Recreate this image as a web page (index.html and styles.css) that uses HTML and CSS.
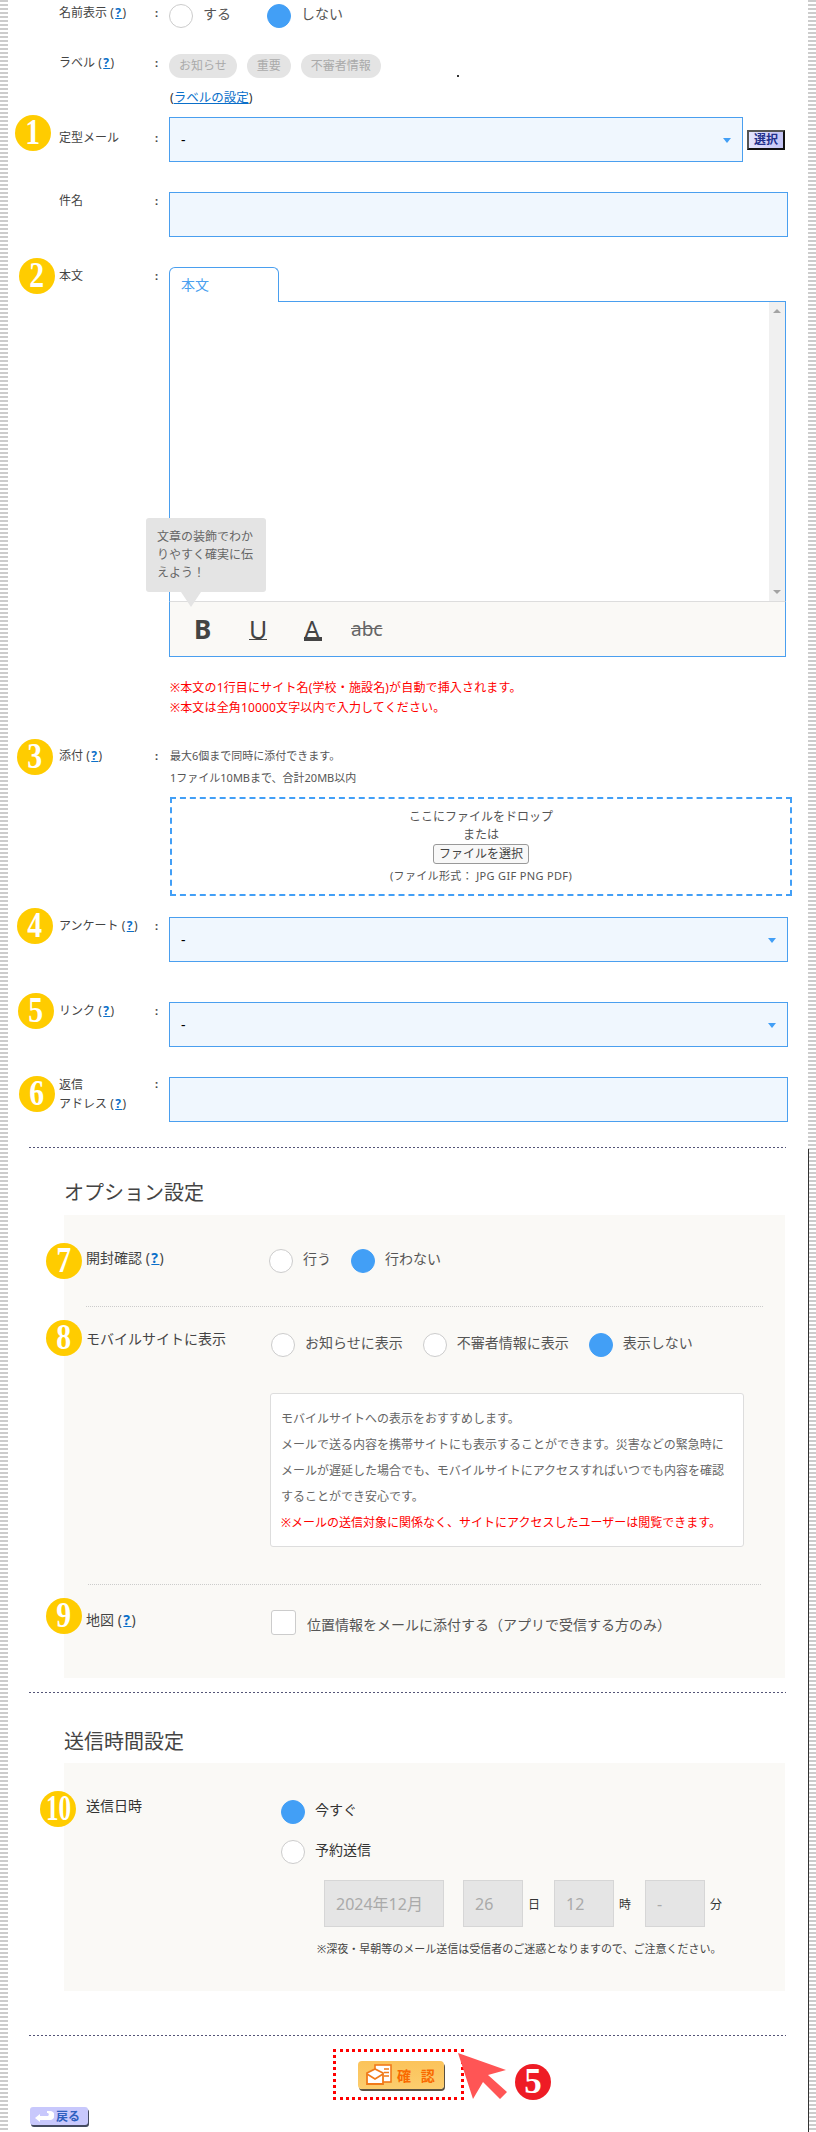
FILE: index.html
```html
<!DOCTYPE html>
<html lang="ja">
<head>
<meta charset="utf-8">
<title>メール作成</title>
<link rel="stylesheet" href="styles.css">
</head>
<body>
<div class="page">
  <span class="frame-line"></span>

  <div class="row row-name">
    <div class="label">名前表示 <span class="help">(<a href="#">?</a>)</span></div>
    <div class="colon">:</div>
    <div class="radios radios-wide">
      <label class="radio"><input type="radio" name="n">する</label>
      <label class="radio"><input type="radio" name="n" checked>しない</label>
    </div>
  </div>

  <div class="row row-labels">
    <div class="label">ラベル <span class="help">(<a href="#">?</a>)</span></div>
    <div class="colon">:</div>
    <div>
      <div class="pills">
        <span class="pill">お知らせ</span>
        <span class="pill">重要</span>
        <span class="pill">不審者情報</span>
      </div>
      <div class="label-link">(<a href="#">ラベルの設定</a>)</div>
    </div>
    <span class="stray-dot"></span>
  </div>

  <div class="row row-template row-low">
    <span class="badge b1"><span class="num">1</span></span>
    <div class="label">定型メール</div>
    <div class="colon">:</div>
    <div class="template-field">
      <div class="select-wrap"><select class="field"><option>-</option></select></div>
      <button class="pick" type="button">選択</button>
    </div>
  </div>

  <div class="row row-gap">
    <div class="label">件名</div>
    <div class="colon">:</div>
    <input class="field" type="text">
  </div>

  <div class="row row-gap">
    <span class="badge b2"><span class="num">2</span></span>
    <div class="label">本文</div>
    <div class="colon">:</div>
    <div>
      <div class="editor">
        <div class="tabs">
          <div class="tab">本文</div>
          <div class="tab-rest"></div>
        </div>
        <div class="editor-body">
          <div class="editor-text"></div>
          <div class="scroll"><span class="scroll-up"></span><span class="scroll-down"></span></div>
        </div>
        <div class="toolbar">
          <span class="tool tool-b">B</span>
          <span class="tool tool-u">U</span>
          <span class="tool tool-a">A</span>
          <span class="tool tool-s">abc</span>
        </div>
        <div class="tip">文章の装飾でわかりやすく確実に伝えよう！</div>
      </div>
      <p class="notes">※本文の1行目にサイト名(学校・施設名)が自動で挿入されます。<br>※本文は全角10000文字以内で入力してください。</p>
    </div>
  </div>

  <div class="row row-attach">
    <span class="badge b3"><span class="num">3</span></span>
    <div class="label">添付 <span class="help">(<a href="#">?</a>)</span></div>
    <div class="colon">:</div>
    <div>
      <p class="hint">最大6個まで同時に添付できます。</p>
      <p class="hint hint-second">1ファイル10MBまで、合計20MB以内</p>
      <div class="drop">
        <div>ここにファイルをドロップ</div>
        <div>または</div>
        <button class="file-btn" type="button">ファイルを選択</button>
        <div class="drop-note">(ファイル形式： JPG GIF PNG PDF)</div>
      </div>
    </div>
  </div>

  <div class="row row-survey">
    <span class="badge b4"><span class="num">4</span></span>
    <div class="label">アンケート <span class="help">(<a href="#">?</a>)</span></div>
    <div class="colon">:</div>
    <div class="select-wrap"><select class="field"><option>-</option></select></div>
  </div>

  <div class="row row-link">
    <span class="badge b5"><span class="num">5</span></span>
    <div class="label">リンク <span class="help">(<a href="#">?</a>)</span></div>
    <div class="colon">:</div>
    <div class="select-wrap"><select class="field"><option>-</option></select></div>
  </div>

  <div class="row row-gap row-up">
    <span class="badge b6"><span class="num">6</span></span>
    <div class="label label-tall">返信<br>アドレス <span class="help">(<a href="#">?</a>)</span></div>
    <div class="colon">:</div>
    <input class="field" type="text">
  </div>

  <div class="divider divider-first"></div>

  <h2 class="heading heading-option">オプション設定</h2>
  <section class="panel panel-option">
    <div class="opt-row opt-open">
      <span class="badge b7"><span class="num">7</span></span>
      <div class="opt-label">開封確認 <span class="help">(<a href="#">?</a>)</span></div>
      <div class="radios">
        <label class="radio"><input type="radio" name="o">行う</label>
        <label class="radio"><input type="radio" name="o" checked>行わない</label>
      </div>
    </div>
    <hr class="sep sep-one">
    <div class="opt-row opt-mobile">
      <span class="badge b8"><span class="num">8</span></span>
      <div class="opt-label">モバイルサイトに表示</div>
      <div>
        <div class="radios">
          <label class="radio"><input type="radio" name="m">お知らせに表示</label>
          <label class="radio"><input type="radio" name="m">不審者情報に表示</label>
          <label class="radio"><input type="radio" name="m" checked>表示しない</label>
        </div>
        <div class="info">
          <p>モバイルサイトへの表示をおすすめします。</p>
          <p>メールで送る内容を携帯サイトにも表示することができます。災害などの緊急時にメールが遅延した場合でも、モバイルサイトにアクセスすればいつでも内容を確認することができ安心です。</p>
          <p class="info-red">※メールの送信対象に関係なく、サイトにアクセスしたユーザーは閲覧できます。</p>
        </div>
      </div>
    </div>
    <hr class="sep sep-two">
    <div class="opt-row opt-map">
      <span class="badge b9"><span class="num">9</span></span>
      <div class="opt-label">地図 <span class="help">(<a href="#">?</a>)</span></div>
      <label class="check"><input type="checkbox">位置情報をメールに添付する（アプリで受信する方のみ）</label>
    </div>
  </section>

  <div class="divider divider-second"></div>

  <h2 class="heading heading-time">送信時間設定</h2>
  <section class="panel panel-time">
    <div class="opt-row opt-time">
      <span class="badge b10"><span class="num num-wide">10</span></span>
      <div class="opt-label opt-label-dark">送信日時</div>
      <div class="time-field">
        <label class="radio"><input type="radio" name="t" checked>今すぐ</label>
        <label class="radio radio-second"><input type="radio" name="t">予約送信</label>
        <div class="date-row">
          <select class="date date-month" disabled><option>2024年12月</option></select>
          <select class="date" disabled><option>26</option></select><span class="unit">日</span>
          <select class="date" disabled><option>12</option></select><span class="unit">時</span>
          <select class="date" disabled><option>-</option></select><span class="unit">分</span>
        </div>
        <p class="time-note">※深夜・早朝等のメール送信は受信者のご迷惑となりますので、ご注意ください。</p>
      </div>
    </div>
  </section>

  <div class="divider divider-third"></div>

  <div class="confirm-area">
    <div class="confirm-box">
      <button class="confirm" type="button">
        <svg class="confirm-icon" width="26" height="21" viewBox="0 0 26 21">
          <rect x="9" y="1" width="16" height="17" fill="#fff" stroke="#f07a1a" stroke-width="1.6"/>
          <path d="M18 5h5M18 8.500h5M18 12h5" stroke="#f07a1a" stroke-width="1.4"/>
          <path d="M1 9l8-4 8 4v11H1z" fill="#fff" stroke="#f07a1a" stroke-width="1.8"/>
          <path d="M1 10l8 5 8-5" fill="none" stroke="#f07a1a" stroke-width="1.6"/>
        </svg>
        <span>確 認</span>
      </button>
    </div>
    <svg class="pointer" width="54" height="50" viewBox="0 0 54 50">
      <path d="M0 0L48 17L30 22L49 39L42 46L25 29L15 46Z" fill="#ff5555"/>
    </svg>
    <span class="step">5</span>
  </div>

  <button class="back" type="button">
    <svg width="20" height="13" viewBox="0 0 20 13"><path d="M1 8l5-4v2h8a2 2 0 0 0 0-3h-1V1h3a4 4 0 0 1 0 9H6v2z" fill="#fff"/></svg>
    <span>戻る</span>
  </button>
</div>
</body>
</html>
```

FILE: styles.css
```css
* { box-sizing: border-box; }

html, body { margin: 0; padding: 0; background: #fff; }

body {
  font-family: "Noto Sans", "Noto Sans CJK JP", sans-serif;
  color: #444;
  font-size: 12px;
}

.page {
  position: relative;
  width: 816px;
  height: 2132px;
  overflow: hidden;
  padding-top: 4px;
  background:
    repeating-linear-gradient(180deg, #ccc 0 2px, #fff 2px 4px) left top / 8px 100% no-repeat,
    repeating-linear-gradient(180deg, #ccc 0 2px, #fff 2px 4px) right top / 8px 100% no-repeat,
    #fff;
}

.frame-line {
  position: absolute;
  left: 808px;
  top: 1149px;
  bottom: 0;
  width: 1px;
  background: #333;
}

p { margin: 0; }
a { color: #0b6fc9; }

/* form rows */
.row {
  position: relative;
  display: grid;
  grid-template-columns: 96px 14px 619px;
  align-items: start;
  padding-left: 59px;
}

.label, .colon { line-height: 18px; color: #444; }
.colon { font-weight: 700; font-size: 11px; }
.row-low .label, .row-low .colon { padding-top: 12px; }
.row-up .label, .row-up .colon { margin-top: -2px; }
.label-tall { line-height: 19px; }

.help { letter-spacing: 1.5px; }
.help a { font-weight: 700; }

.row-labels { margin-top: 26px; }
.row-template { margin-top: 10px; }
.row-gap { margin-top: 30px; }
.row-attach { margin-top: 29px; }
.row-survey { margin-top: 21px; }
.row-link { margin-top: 40px; }

/* numbered circles */
.badge, .step {
  position: absolute;
  width: 36px;
  height: 36px;
  border-radius: 50%;
  text-align: center;
  font-family: "Liberation Serif", serif;
  font-weight: 700;
  font-size: 35px;
  line-height: 36px;
  color: #fff;
}
.badge { background: #ffcc00; }
.num { display: inline-block; transform: scaleX(0.85); }
.num-wide { transform: scaleX(0.72); }
.b1 { left: 15px; top: -2px; }
.b2 { left: 19px; top: -9px; }
.b3 { left: 17px; top: -8px; }
.b4 { left: 17px; top: -9px; }
.b5 { left: 18px; top: -9px; }
.b6 { left: 19px; top: -1px; }
.b7 { left: -40px; top: -6px; }
.b8 { left: -40px; top: -13px; }
.b9 { left: -40px; top: -12px; }
.b10 { left: -46px; top: -9px; }

/* radios */
.radios { display: flex; gap: 20px; }
.radios-wide { gap: 36px; }
.radio {
  display: inline-flex;
  align-items: flex-start;
  gap: 10px;
  font-size: 14px;
  line-height: 20px;
  color: #555;
}
.radio input, .check input {
  appearance: none;
  margin: 0;
  flex: none;
  width: 24px;
  height: 24px;
  background: #fff;
  border: 1px solid #ccc;
  border-radius: 50%;
}
.radio input:checked { background: #429ff6; border-color: #429ff6; }

/* labels */
.pills { display: flex; gap: 10px; }
.pill {
  height: 24px;
  padding: 0 10px;
  border-radius: 12px;
  background: #e4e4e4;
  color: #aaa;
  font-size: 12px;
  line-height: 24px;
}
.label-link { margin-top: 11px; line-height: 18px; font-size: 12.5px; color: #333; padding-left: 1px; }
.stray-dot {
  position: absolute;
  left: 457px;
  top: 21px;
  width: 2px;
  height: 2px;
  background: #333;
}

/* inputs */
.field {
  appearance: none;
  display: block;
  width: 100%;
  height: 45px;
  padding: 0 11px;
  border: 1px solid #4a9fef;
  border-radius: 0;
  background: #f0f7fe;
  font-family: inherit;
  font-size: 14px;
  color: #000;
}
.select-wrap { position: relative; }
.select-wrap::after {
  content: "";
  position: absolute;
  right: 12px;
  top: 21px;
  border-style: solid;
  border-width: 5px 4px 0;
  border-color: #429ff6 transparent transparent;
}
.template-field { display: grid; grid-template-columns: 574px 38px; column-gap: 4px; }
.pick {
  align-self: center;
  width: 38px;
  height: 20px;
  margin: 0;
  padding: 0;
  border: 2px solid;
  border-color: #555 #111 #111 #555;
  background: linear-gradient(90deg, #e4e4ff, #c4c4f4);
  color: #22308c;
  font-family: inherit;
  font-size: 12px;
  font-weight: 700;
  line-height: 16px;
}

/* editor */
.editor { position: relative; width: 617px; }
.tabs { display: flex; height: 35px; }
.tab {
  width: 110px;
  padding: 7px 0 0 11px;
  border: 1px solid #4a9fef;
  border-bottom: 0;
  border-radius: 6px 6px 0 0;
  color: #4a9fef;
  font-size: 14px;
  line-height: 20px;
}
.tab-rest { flex: 1; border-bottom: 1px solid #4a9fef; }
.editor-body {
  display: flex;
  height: 299px;
  border-left: 1px solid #4a9fef;
  border-right: 1px solid #4a9fef;
}
.editor-text { flex: 1; }
.scroll {
  position: relative;
  width: 16px;
  background: #f0f0f0;
}
.scroll-up, .scroll-down {
  position: absolute;
  left: 4px;
  border-style: solid;
  border-color: transparent;
}
.scroll-up { top: 7px; border-width: 0 4px 4px; border-bottom-color: #a3a3a3; }
.scroll-down { bottom: 7px; border-width: 4px 4px 0; border-top-color: #a3a3a3; }
.toolbar {
  display: flex;
  height: 56px;
  padding-left: 24px;
  border: 1px solid #4a9fef;
  border-top: 1px solid #ddd;
  background: #faf9f6;
  color: #444;
  font-family: "Noto Sans", sans-serif;
}
.tool { display: block; position: relative; line-height: 30px; padding-top: 12px; }
.tool-b { font-size: 26px; font-weight: 700; width: 55px; }
.tool-u { font-size: 25px; width: 55px; }
.tool-u::after {
  content: "";
  position: absolute;
  left: 0;
  top: 37px;
  width: 18px;
  height: 1px;
  background: #444;
}
.tool-a { font-size: 25px; width: 47px; }
.tool-a::after {
  content: "";
  position: absolute;
  left: 0;
  top: 35px;
  width: 18px;
  height: 4px;
  background: #444;
}
.tool-s { font-size: 19px; text-decoration: line-through; padding-top: 12px; color: #666; }
.tip {
  position: absolute;
  left: -23px;
  top: 251px;
  width: 120px;
  height: 74px;
  padding: 10px 11px;
  border-radius: 3px;
  background: #e4e4e4;
  color: #666;
  font-size: 12px;
  line-height: 18px;
}
.tip::after {
  content: "";
  position: absolute;
  left: 35px;
  top: 74px;
  border-style: solid;
  border-width: 15px 10px 0;
  border-color: #e4e4e4 transparent transparent;
}
.notes { margin-top: 21px; padding-left: 1px; color: #f00; font-size: 12px; line-height: 20px; letter-spacing: 0.15px; }

/* attachments */
.hint { font-size: 11px; line-height: 18px; color: #555; padding-left: 1px; }
.hint-second { margin-top: 4px; }
.drop {
  width: 622px;
  height: 99px;
  margin: 10px 0 0 1px;
  padding-top: 9px;
  border: 2px dashed #429ff6;
  text-align: center;
  font-size: 12px;
  line-height: 18px;
  color: #555;
}
.file-btn {
  display: block;
  width: 96px;
  height: 20px;
  margin: 0 auto;
  padding: 0;
  border: 1px solid #999;
  border-radius: 3px;
  background: #f8f8f8;
  font-family: inherit;
  font-size: 12px;
  line-height: 18px;
  color: #444;
}
.drop-note { margin-top: 3px; font-size: 11px; letter-spacing: 0.34px; }

/* dividers */
.divider {
  width: 757px;
  height: 1px;
  margin-left: 29px;
  background: repeating-linear-gradient(90deg, #557 0 2px, transparent 2px 4px);
}
.divider-first { margin-top: 25px; }
.divider-second { margin-top: 14px; }
.divider-third { margin-top: 44px; }

.heading {
  margin: 0 0 0 64px;
  font-size: 20px;
  font-weight: 400;
  line-height: 28px;
  color: #444;
}
.heading-option { margin-top: 31px; margin-bottom: 8px; }
.heading-time { margin-top: 35px; margin-bottom: 7px; }

/* panels */
.panel {
  width: 721px;
  margin-left: 64px;
  padding: 0 22px;
  background: #faf9f6;
}
.panel-option { height: 463px; padding-top: 34px; }
.panel-time { height: 228px; padding-top: 37px; }

.opt-row {
  position: relative;
  display: grid;
  grid-template-columns: 183px 1fr;
  align-items: start;
}
.opt-label { font-size: 14px; line-height: 18px; color: #444; }
.opt-label-dark { color: #333; margin-top: -3px; }
.opt-mobile .opt-label { margin-top: -3px; }
.opt-mobile .radios { margin-left: 2px; }
.opt-map .opt-label { margin-top: 1px; }

.sep { height: 0; margin: 0; border: 0; border-top: 1px dotted #ccc; }
.sep-one { margin: 33px 0 26px; }
.sep-two { margin: 37px 0 25px 2px; width: 673px; }

.info {
  width: 474px;
  height: 154px;
  margin: 36px 0 0 1px;
  padding: 12px 10px;
  border: 1px solid #ddd;
  border-radius: 3px;
  background: #fff;
  font-size: 12px;
  line-height: 26px;
  color: #666;
}
.info-red { color: #f00; }

.check {
  display: flex;
  align-items: flex-start;
  gap: 11px;
  margin-left: 2px;
  font-size: 14px;
  line-height: 29px;
  color: #555;
}
.check input { width: 25px; height: 25px; border-radius: 3px; }

/* send time */
.time-field { display: flex; flex-direction: column; align-items: flex-start; margin-left: 12px; }
.time-field .radio { color: #333; }
.radio-second { margin-top: 16px; }
.date-row { display: flex; align-items: center; margin: 16px 0 0 43px; }
.date {
  appearance: none;
  width: 60px;
  height: 47px;
  padding: 0 0 0 11px;
  border: 1px solid #d6d6d6;
  border-radius: 0;
  background: #e5e5e5;
  opacity: 1;
  font-family: inherit;
  font-size: 16px;
  color: #aaa;
}
.date-month { width: 120px; margin-right: 19px; }
.unit { margin: 0 14px 0 5px; font-size: 12px; color: #333; }
.time-note { margin: 13px 0 0 36px; font-size: 11px; line-height: 18px; color: #444; white-space: nowrap; }

/* confirm */
.confirm-area { position: relative; margin: 13px 0 0 333px; width: 231px; }
.confirm-box {
  display: flex;
  align-items: center;
  width: 131px;
  height: 51px;
  padding-left: 22px;
  border: 3px dotted #f00;
}
.confirm {
  display: flex;
  align-items: center;
  gap: 5px;
  width: 86px;
  height: 28px;
  padding: 0 0 0 8px;
  border: 0;
  border-radius: 4px;
  background: linear-gradient(180deg, #fbc35a, #fccd6e);
  box-shadow: 1px 2px 0 #5a5040;
  font-family: inherit;
  font-size: 14px;
  font-weight: 700;
  letter-spacing: 3px;
  color: #f96a00;
  white-space: nowrap;
}
.confirm-icon { flex: none; }
.pointer { position: absolute; left: 125px; top: 4px; }
.step { left: 182px; top: 15px; background: #ee1c25; }

.back {
  display: flex;
  align-items: center;
  gap: 2px;
  width: 58px;
  height: 18px;
  margin: 7px 0 0 30px;
  padding: 0 0 0 4px;
  border: 0;
  border-radius: 3px;
  background: #c8c8fc;
  box-shadow: 1px 2px 0 #444a60;
  font-family: inherit;
  font-size: 12px;
  font-weight: 700;
  color: #2f5fc0;
}
```
